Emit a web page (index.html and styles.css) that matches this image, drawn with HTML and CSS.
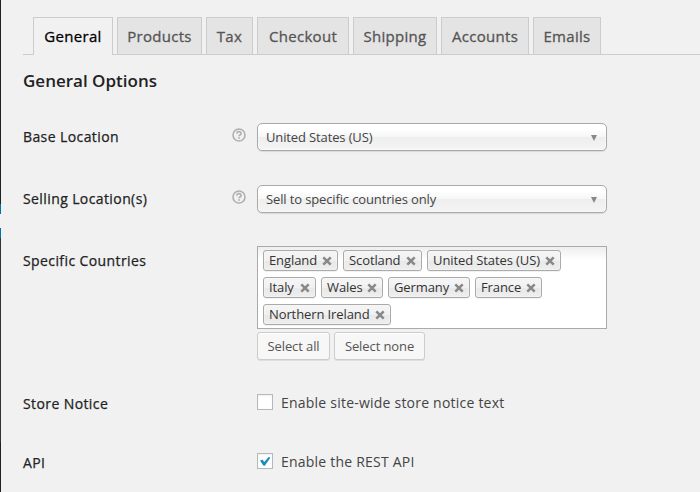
FILE: index.html
```
<!DOCTYPE html>
<html lang="en">
<head>
<meta charset="utf-8">
<title>General Options</title>
<link rel="stylesheet" href="styles.css">
</head>
<body>
<svg width="0" height="0" class="defs">
  <symbol id="help" viewBox="0 0 14 14"><circle cx="7" cy="7" r="6" fill="none" stroke="currentColor" stroke-width="1.6"/><path d="M5 5.6a2 1.8 0 1 1 3 1.3c-.7.4-1 .6-1 1.3" fill="none" stroke="currentColor" stroke-width="1.7"/><path d="M6.1 9.2h1.8v1.6H6.1z" fill="currentColor"/></symbol>
  <symbol id="x" viewBox="0 0 10 10"><path d="M1.3 1.3l7.4 7.4M8.7 1.3L1.3 8.7" fill="none" stroke="currentColor" stroke-width="2.5"/></symbol>
</svg>
<div class="app">
  <aside class="menu-edge"><i class="dark"></i><i class="blue"></i><i class="notch"></i><i class="blue"></i><i class="sub"></i><i class="rest"></i></aside>
  <main class="content">
    <nav class="tabs">
      <a class="tab w-general active">General</a><a class="tab w-products">Products</a><a class="tab w-tax">Tax</a><a class="tab w-checkout">Checkout</a><a class="tab w-shipping">Shipping</a><a class="tab w-accounts">Accounts</a><a class="tab w-emails">Emails</a>
    </nav>
    <h3>General Options</h3>
    <div class="row row-select">
      <label>Base Location</label>
      <svg class="help"><use href="#help"/></svg>
      <div class="select"><span>United States (US)</span><i class="caret"></i></div>
    </div>
    <div class="row row-select">
      <label>Selling Location(s)</label>
      <svg class="help"><use href="#help"/></svg>
      <div class="select"><span>Sell to specific countries only</span><i class="caret"></i></div>
    </div>
    <div class="row row-multi">
      <label>Specific Countries</label>
      <div class="field">
        <div class="multi">
          <span class="chip c1">England<svg><use href="#x"/></svg></span>
          <span class="chip c2">Scotland<svg><use href="#x"/></svg></span>
          <span class="chip c3">United States (US)<svg><use href="#x"/></svg></span>
          <span class="chip c4">Italy<svg><use href="#x"/></svg></span>
          <span class="chip c5">Wales<svg><use href="#x"/></svg></span>
          <span class="chip c6">Germany<svg><use href="#x"/></svg></span>
          <span class="chip c7">France<svg><use href="#x"/></svg></span>
          <span class="chip c8">Northern Ireland<svg><use href="#x"/></svg></span>
        </div>
        <div class="buttons"><a class="button b-all">Select all</a><a class="button b-none">Select none</a></div>
      </div>
    </div>
    <div class="row row-check">
      <label>Store Notice</label>
      <div class="check"><i class="box"></i><span>Enable site-wide store notice text</span></div>
    </div>
    <div class="row row-check">
      <label>API</label>
      <div class="check"><i class="box"><svg viewBox="0 0 14 14"><path d="M2 6.8L4.6 5.6 6.2 8 10.9 2.8 12.2 4 6.8 11.8H5.5z" fill="#1e8cbe"/></svg></i><span>Enable the REST API</span></div>
    </div>
  </main>
</div>
</body>
</html>
```

FILE: styles.css
```
* { box-sizing: border-box; }
body { margin: 0; background: #f1f1f1; color: #444; font: 13px/19px "Open Sans", sans-serif; }
.defs { display: none; }
.app { display: flex; height: 492px; overflow: hidden; }
.menu-edge { width: 1px; display: flex; flex-direction: column; }
.dark { height: 204px; background: #222; }
.blue { height: 10px; background: #0074a2; }
.notch { height: 14px; background: #f1f1f1; }
.sub { height: 204px; background: #333; }
.rest { flex: 1; background: #222; }
.content { flex: 1; padding: 17px 0 0 22px; }
.tabs { display: flex; gap: 4px; height: 38px; padding-left: 10px; border-bottom: 1px solid #ccc; }
.tab { height: 37px; border: 1px solid #ccc; border-bottom: 0; background: #e4e4e4; color: #555; font-size: 15px; font-weight: 500; letter-spacing: .3px; -webkit-text-stroke: .3px currentColor; line-height: 37px; text-align: center; white-space: nowrap; }
.tab.active { height: 38px; background: #f1f1f1; color: #000; }
.w-general { width: 80px; }
.w-products { width: 85px; }
.w-tax { width: 47px; }
.w-checkout { width: 92px; }
.w-shipping { width: 84px; }
.w-accounts { width: 88px; }
.w-emails { width: 68px; }
h3 { margin: 13px 0 0; height: 26px; font-size: 17px; line-height: 26px; font-weight: 600; color: #222; }
.row { display: flex; }
.row label { width: 209px; color: #222; font-size: 14px; font-weight: 500; letter-spacing: .4px; -webkit-text-stroke: .25px currentColor; line-height: 20px; padding-top: 4px; }
.row-select { height: 62px; }
.row-select:first-of-type { margin-top: 29px; }
.help { width: 14px; height: 14px; margin: 5px 11px 0 0; color: #b0b0b0; }
.select { width: 350px; height: 28px; border: 1px solid #aaa; border-radius: 5px; padding: 0 9px 0 8px; display: flex; align-items: center; justify-content: space-between; background: linear-gradient(#fff 20%, #f6f6f6 50%, #eee 52%, #f4f4f4 100%); box-shadow: inset 0 0 3px #fff, 0 1px 1px rgba(0,0,0,.1); white-space: nowrap; letter-spacing: -.13px; }
.caret { margin-top: 1px; border: 3.5px solid transparent; border-top: 6px solid #888; border-bottom: 0; }
.row-multi { height: 147px; }
.row-multi label, .row-check label { width: 234px; }
.field { margin-top: -1px; }
.multi { width: 350px; height: 83px; border: 1px solid #aaa; padding: 3px 5px; display: flex; flex-wrap: wrap; align-content: flex-start; gap: 6px 5px; background: linear-gradient(#eee 0, #fff 13px); }
.chip { display: flex; align-items: center; justify-content: space-between; height: 21px; padding: 0 5px 0; border: 1px solid #aaa; border-radius: 3px; color: #333; white-space: nowrap; line-height: 17px; letter-spacing: -.1px; background: linear-gradient(#f4f4f4 20%, #f0f0f0 50%, #e8e8e8 52%, #eee 100%); box-shadow: inset 0 0 2px #fff, 0 1px 0 rgba(0,0,0,.05); }
.chip svg { width: 10px; height: 10px; color: #888; }
.c1 { width: 75px; }
.c2 { width: 79px; }
.c3 { width: 134px; }
.c4 { width: 53px; }
.c5 { width: 62px; }
.c6 { width: 82px; }
.c7 { width: 67px; }
.c8 { width: 128px; }
.buttons { display: flex; gap: 4px; margin-top: 3px; }
.button { height: 28px; border: 1px solid #ccc; border-radius: 3px; background: #f7f7f7; color: #555; line-height: 26px; text-align: center; letter-spacing: -.1px; white-space: nowrap; box-shadow: inset 0 1px 0 #fff, 0 1px 0 rgba(0,0,0,.08); }
.b-all { width: 73px; }
.b-none { width: 91px; }
.row-check { height: 59px; }
.row-check label { padding-top: 0; }
.check { display: flex; gap: 8px; height: 16px; font-size: 14px; line-height: 18px; letter-spacing: .22px; }
.box { width: 16px; height: 16px; border: 1px solid #b4b9be; background: #fff; box-shadow: inset 0 1px 2px rgba(0,0,0,.07); }
.box svg { display: block; width: 14px; height: 14px; }
```
